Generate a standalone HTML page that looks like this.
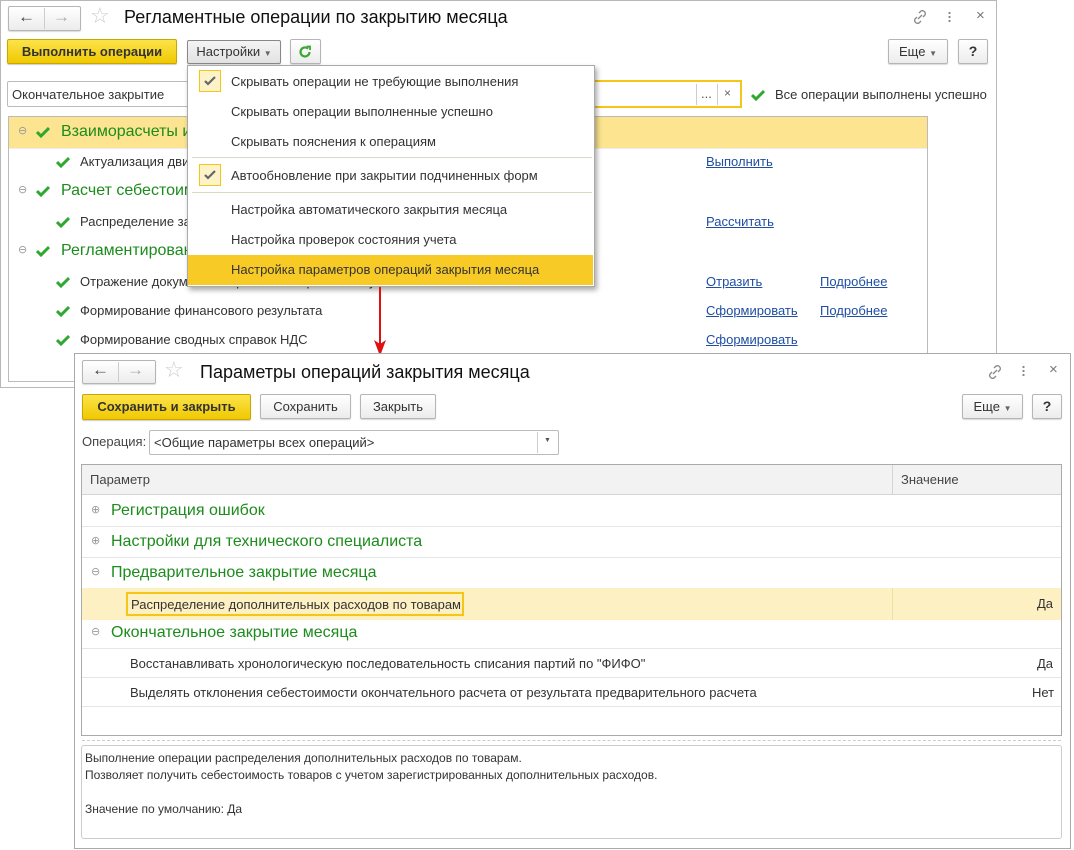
<!DOCTYPE html>
<html><head><meta charset="utf-8">
<style>
*{box-sizing:border-box;margin:0;padding:0}
body{width:1074px;height:850px;background:#fff;position:relative;overflow:hidden;font-family:"Liberation Sans","DejaVu Sans",sans-serif;font-size:13px;color:#333}
.a{position:absolute;white-space:nowrap}
.win{position:absolute;background:#fff;border:1px solid #b8b8b8}
.btn{position:absolute;border:1px solid #b5b5b5;border-radius:2px;background:linear-gradient(#fff,#ececec);box-shadow:0 1px 1px rgba(0,0,0,.15);text-align:center;font-size:13px;color:#333}
.yb{position:absolute;border:1px solid #c8a800;border-radius:2px;background:linear-gradient(#fbe34a,#f1c900);box-shadow:0 1px 1px rgba(0,0,0,.2);text-align:center;font-weight:bold;font-size:13px;color:#333}
.g{color:#1c8c1c;font-size:16px}
.lk{color:#1f4ea3;text-decoration:underline}
.ck{position:absolute;width:14px;height:12px}
.ic{position:absolute;color:#888}
</style></head><body>

<!-- window 1 -->
<div class="win" style="left:0;top:0;width:997px;height:388px"></div>
<div class="btn" style="left:8px;top:6px;width:73px;height:25px"></div>
<div class="a" style="left:44px;top:8px;width:1px;height:21px;background:#ccc"></div>
<div class="a" style="left:18px;top:7px;font-size:17px;color:#444">&#8592;</div>
<div class="a" style="left:53px;top:7px;font-size:17px;color:#aaa">&#8594;</div>
<div class="a" style="left:90px;top:3px;font-size:22px;color:#ccc">&#9734;</div>
<div class="a" style="left:124px;top:7px;font-size:18px;color:#111">Регламентные операции по закрытию месяца</div>
<svg class="a" style="left:911px;top:8px" width="18" height="18" viewBox="0 0 18 18" fill="none" stroke="#888" stroke-width="1.3"><path d="M8 5l2-2a3 3 0 014 4l-2 2M10 13l-2 2a3 3 0 01-4-4l2-2M7 11l4-4"/></svg>
<div class="a" style="left:948px;top:11px;width:3px;height:12px;background:radial-gradient(circle,#888 1px,transparent 1.3px) 0 0/3px 4px"></div>
<div class="a" style="left:976px;top:7px;font-size:15px;color:#777">×</div>

<div class="yb" style="left:7px;top:39px;width:170px;height:25px;line-height:23px">Выполнить операции</div>
<div class="btn" style="left:187px;top:40px;width:94px;height:24px;line-height:22px;border-color:#888;background:linear-gradient(#f4f4f4,#e2e2e2)">Настройки <span style="font-size:8px;color:#666">▼</span></div>
<div class="btn" style="left:290px;top:39px;width:31px;height:25px"></div>
<svg class="a" style="left:297px;top:44px" width="16" height="16" viewBox="0 0 16 16" fill="none" stroke="#3aa635" stroke-width="2.2"><path d="M12.5 8a4.5 4.5 0 11-1.4-3.3"/><path d="M9.5 2.5h3.5v3.5" stroke-width="1.8"/></svg>
<div class="btn" style="left:888px;top:39px;width:60px;height:25px;line-height:23px">Еще <span style="font-size:8px;color:#666">▼</span></div>
<div class="btn" style="left:958px;top:39px;width:30px;height:25px;line-height:23px;font-weight:bold;font-size:14px">?</div>

<div class="a" style="left:7px;top:81px;width:200px;height:26px;border:1px solid #bbb;border-radius:2px;padding:5px 4px;font-size:13px">Окончательное закрытие</div>
<div class="a" style="left:590px;top:80px;width:152px;height:28px;border:2px solid #f5c518"></div>
<div class="a" style="left:696px;top:84px;width:1px;height:21px;background:#ccc"></div>
<div class="a" style="left:717px;top:84px;width:1px;height:21px;background:#ccc"></div>
<div class="a" style="left:701px;top:86px;color:#555">...</div>
<div class="a" style="left:724px;top:86px;color:#666;font-size:12px">×</div>
<svg class="ck" style="left:751px;top:89px" viewBox="0 0 14 12"><path d="M1 6l4 4 8-8" fill="none" stroke="#2ea82e" stroke-width="3"/></svg>
<div class="a" style="left:775px;top:87px">Все операции выполнены успешно</div>

<div class="a" style="left:8px;top:116px;width:920px;height:266px;border:1px solid #bbb"></div>
<div class="a" style="left:9px;top:117px;width:918px;height:31px;background:#fce491"></div>
<div class="a" style="left:9px;top:148px;width:918px;height:1px;background:#eee"></div>

<div class="a" style="left:18px;top:124px;color:#999;font-size:11px">⊖</div>
<svg class="ck" style="left:36px;top:126px" viewBox="0 0 14 12"><path d="M1 6l4 4 8-8" fill="none" stroke="#2ea82e" stroke-width="3"/></svg>
<div class="a g" style="left:61px;top:123px">Взаиморасчеты и</div>
<svg class="ck" style="left:56px;top:156px" viewBox="0 0 14 12"><path d="M1 6l4 4 8-8" fill="none" stroke="#2ea82e" stroke-width="3"/></svg>
<div class="a" style="left:80px;top:154px">Актуализация дви</div>
<div class="a lk" style="left:706px;top:154px">Выполнить</div>

<div class="a" style="left:18px;top:183px;color:#999;font-size:11px">⊖</div>
<svg class="ck" style="left:36px;top:185px" viewBox="0 0 14 12"><path d="M1 6l4 4 8-8" fill="none" stroke="#2ea82e" stroke-width="3"/></svg>
<div class="a g" style="left:61px;top:182px">Расчет себестоим</div>
<svg class="ck" style="left:56px;top:216px" viewBox="0 0 14 12"><path d="M1 6l4 4 8-8" fill="none" stroke="#2ea82e" stroke-width="3"/></svg>
<div class="a" style="left:80px;top:214px">Распределение за</div>
<div class="a lk" style="left:706px;top:214px">Рассчитать</div>

<div class="a" style="left:18px;top:243px;color:#999;font-size:11px">⊖</div>
<svg class="ck" style="left:36px;top:245px" viewBox="0 0 14 12"><path d="M1 6l4 4 8-8" fill="none" stroke="#2ea82e" stroke-width="3"/></svg>
<div class="a g" style="left:61px;top:242px">Регламентирован</div>
<svg class="ck" style="left:56px;top:276px" viewBox="0 0 14 12"><path d="M1 6l4 4 8-8" fill="none" stroke="#2ea82e" stroke-width="3"/></svg>
<div class="a" style="left:80px;top:274px">Отражение документов в регламентированном учете</div>
<div class="a lk" style="left:706px;top:274px">Отразить</div>
<div class="a lk" style="left:820px;top:274px">Подробнее</div>
<svg class="ck" style="left:56px;top:305px" viewBox="0 0 14 12"><path d="M1 6l4 4 8-8" fill="none" stroke="#2ea82e" stroke-width="3"/></svg>
<div class="a" style="left:80px;top:303px">Формирование финансового результата</div>
<div class="a lk" style="left:706px;top:303px">Сформировать</div>
<div class="a lk" style="left:820px;top:303px">Подробнее</div>
<svg class="ck" style="left:56px;top:334px" viewBox="0 0 14 12"><path d="M1 6l4 4 8-8" fill="none" stroke="#2ea82e" stroke-width="3"/></svg>
<div class="a" style="left:80px;top:332px">Формирование сводных справок НДС</div>
<div class="a lk" style="left:706px;top:332px">Сформировать</div>

<!-- menu -->
<div class="a" style="left:187px;top:65px;width:408px;height:222px;background:#fff;border:1px solid #aaa;box-shadow:2px 3px 5px rgba(0,0,0,.35)"></div>
<div class="a" style="left:199px;top:70px;width:22px;height:22px;border:1px solid #f5c518;background:#fdf3c8"></div>
<svg class="a" style="left:204px;top:76px" width="12" height="10" viewBox="0 0 12 10"><path d="M1 5l3 3 7-7" fill="none" stroke="#666" stroke-width="2.2"/></svg>
<div class="a" style="left:231px;top:74px">Скрывать операции не требующие выполнения</div>
<div class="a" style="left:231px;top:104px">Скрывать операции выполненные успешно</div>
<div class="a" style="left:231px;top:134px">Скрывать пояснения к операциям</div>
<div class="a" style="left:192px;top:157px;width:400px;height:1px;background:#ddd8c0"></div>
<div class="a" style="left:199px;top:164px;width:22px;height:22px;border:1px solid #f5c518;background:#fdf3c8"></div>
<svg class="a" style="left:204px;top:170px" width="12" height="10" viewBox="0 0 12 10"><path d="M1 5l3 3 7-7" fill="none" stroke="#666" stroke-width="2.2"/></svg>
<div class="a" style="left:231px;top:168px">Автообновление при закрытии подчиненных форм</div>
<div class="a" style="left:192px;top:192px;width:400px;height:1px;background:#ddd8c0"></div>
<div class="a" style="left:231px;top:202px">Настройка автоматического закрытия месяца</div>
<div class="a" style="left:231px;top:232px">Настройка проверок состояния учета</div>
<div class="a" style="left:188px;top:255px;width:405px;height:30px;background:#f8ca25"></div>
<div class="a" style="left:231px;top:262px">Настройка параметров операций закрытия месяца</div>

<!-- arrow -->
<div class="a" style="left:379px;top:287px;width:2px;height:58px;background:#e01010"></div>
<svg class="a" style="left:374px;top:340px" width="12" height="16" viewBox="0 0 12 16"><path d="M0 0L6 16 12 0 6 4z" fill="#e01010"/></svg>

<!-- window 2 -->
<div class="win" style="left:74px;top:353px;width:997px;height:496px;border-color:#aaa"></div>
<div class="btn" style="left:82px;top:360px;width:74px;height:24px"></div>
<div class="a" style="left:118px;top:362px;width:1px;height:20px;background:#ccc"></div>
<div class="a" style="left:92px;top:360px;font-size:17px;color:#444">&#8592;</div>
<div class="a" style="left:127px;top:360px;font-size:17px;color:#aaa">&#8594;</div>
<div class="a" style="left:164px;top:357px;font-size:22px;color:#ccc">&#9734;</div>
<div class="a" style="left:200px;top:362px;font-size:18px;color:#111">Параметры операций закрытия месяца</div>
<svg class="a" style="left:986px;top:363px" width="18" height="18" viewBox="0 0 18 18" fill="none" stroke="#888" stroke-width="1.3"><path d="M8 5l2-2a3 3 0 014 4l-2 2M10 13l-2 2a3 3 0 01-4-4l2-2M7 11l4-4"/></svg>
<div class="a" style="left:1022px;top:365px;width:3px;height:12px;background:radial-gradient(circle,#888 1px,transparent 1.3px) 0 0/3px 4px"></div>
<div class="a" style="left:1049px;top:361px;font-size:15px;color:#777">×</div>

<div class="yb" style="left:82px;top:394px;width:169px;height:26px;line-height:24px">Сохранить и закрыть</div>
<div class="btn" style="left:260px;top:394px;width:91px;height:25px;line-height:23px">Сохранить</div>
<div class="btn" style="left:360px;top:394px;width:76px;height:25px;line-height:23px">Закрыть</div>
<div class="btn" style="left:962px;top:394px;width:61px;height:25px;line-height:23px">Еще <span style="font-size:8px;color:#666">▼</span></div>
<div class="btn" style="left:1032px;top:394px;width:30px;height:25px;line-height:23px;font-weight:bold;font-size:14px">?</div>

<div class="a" style="left:82px;top:434px;color:#444">Операция:</div>
<div class="a" style="left:149px;top:430px;width:410px;height:25px;border:1px solid #bbb;border-radius:2px;padding:4px 4px">&lt;Общие параметры всех операций&gt;</div>
<div class="a" style="left:537px;top:432px;width:1px;height:21px;background:#ccc"></div>
<div class="a" style="left:544px;top:437px;font-size:7px;color:#555">▼</div>

<div class="a" style="left:81px;top:464px;width:981px;height:272px;border:1px solid #aaa"></div>
<div class="a" style="left:82px;top:465px;width:979px;height:30px;background:#f2f2f2;border-bottom:1px solid #d5d5d5"></div>
<div class="a" style="left:892px;top:465px;width:1px;height:30px;background:#d5d5d5"></div>
<div class="a" style="left:90px;top:472px;color:#444">Параметр</div>
<div class="a" style="left:901px;top:472px;color:#444">Значение</div>

<div class="a" style="left:82px;top:526px;width:979px;height:1px;background:#e6e6e6"></div>
<div class="a" style="left:82px;top:557px;width:979px;height:1px;background:#e6e6e6"></div>
<div class="a" style="left:82px;top:588px;width:979px;height:32px;background:#fdf0c2"></div>
<div class="a" style="left:892px;top:588px;width:1px;height:32px;background:#f0e0a8"></div>
<div class="a" style="left:82px;top:648px;width:979px;height:1px;background:#e6e6e6"></div>
<div class="a" style="left:82px;top:677px;width:979px;height:1px;background:#e6e6e6"></div>
<div class="a" style="left:82px;top:706px;width:979px;height:1px;background:#e6e6e6"></div>

<div class="a" style="left:91px;top:503px;color:#999;font-size:11px">⊕</div>
<div class="a g" style="left:111px;top:502px">Регистрация ошибок</div>
<div class="a" style="left:91px;top:534px;color:#999;font-size:11px">⊕</div>
<div class="a g" style="left:111px;top:533px">Настройки для технического специалиста</div>
<div class="a" style="left:91px;top:565px;color:#999;font-size:11px">⊖</div>
<div class="a g" style="left:111px;top:564px">Предварительное закрытие месяца</div>
<div class="a" style="left:126px;top:592px;width:338px;height:24px;border:2px solid #f5c518;padding:3px 3px;color:#333">Распределение дополнительных расходов по товарам</div>
<div class="a" style="left:1037px;top:596px">Да</div>
<div class="a" style="left:91px;top:625px;color:#999;font-size:11px">⊖</div>
<div class="a g" style="left:111px;top:624px">Окончательное закрытие месяца</div>
<div class="a" style="left:130px;top:656px">Восстанавливать хронологическую последовательность списания партий по "ФИФО"</div>
<div class="a" style="left:1037px;top:656px">Да</div>
<div class="a" style="left:130px;top:685px">Выделять отклонения себестоимости окончательного расчета от результата предварительного расчета</div>
<div class="a" style="left:1032px;top:685px">Нет</div>

<div class="a" style="left:82px;top:740px;width:979px;height:0;border-top:1px dashed #ccc"></div>
<div class="a" style="left:81px;top:745px;width:981px;height:94px;border:1px solid #ccc;border-radius:3px"></div>
<div class="a" style="left:85px;top:750px;font-size:12px;line-height:17px;color:#333">Выполнение операции распределения дополнительных расходов по товарам.<br>Позволяет получить себестоимость товаров с учетом зарегистрированных дополнительных расходов.<br><br>Значение по умолчанию: Да</div>
</body></html>
